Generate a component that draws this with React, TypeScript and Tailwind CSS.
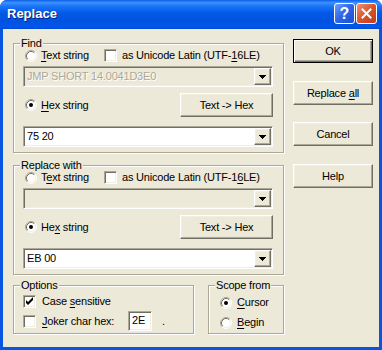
import React from 'react';

const raised =
  'border border-t-white border-l-white border-r-[#716F64] border-b-[#716F64] shadow-[inset_-1px_-1px_0_#ACA899,inset_1px_1px_0_#F1EFE2]';
const sunken =
  'border border-t-[#ACA899] border-l-[#ACA899] border-r-white border-b-white shadow-[inset_1px_1px_0_#716F64,inset_-1px_-1px_0_#F1EFE2]';

function U({ children }: { children: React.ReactNode }) {
  return <span className="underline decoration-1 underline-offset-[2px]">{children}</span>;
}

function Radio({ checked }: { checked?: boolean }) {
  return (
    <svg width="12" height="12" viewBox="0 0 12 12" className="shrink-0">
      <circle cx="6" cy="6" r="5" fill="white" />
      <path d="M2.11 9.89 A5.5 5.5 0 0 1 9.89 2.11" fill="none" stroke="#ACA899" />
      <path d="M9.89 2.11 A5.5 5.5 0 0 1 2.11 9.89" fill="none" stroke="white" />
      <path d="M2.82 9.18 A4.5 4.5 0 0 1 9.18 2.82" fill="none" stroke="#716F64" />
      <path d="M9.18 2.82 A4.5 4.5 0 0 1 2.82 9.18" fill="none" stroke="#F1EFE2" />
      {checked && <circle cx="6" cy="6" r="2" fill="black" />}
    </svg>
  );
}

function Check({ checked }: { checked?: boolean }) {
  return (
    <div className={`${sunken} w-[13px] h-[13px] shrink-0 bg-white flex items-center justify-center`}>
      {checked && (
        <svg width="9" height="9" viewBox="0 0 9 9">
          <path d="M1 3v3l2 2l5-5V0L3 5z" fill="black" />
        </svg>
      )}
    </div>
  );
}

function Arrow() {
  return (
    <svg width="7" height="4" viewBox="0 0 7 4" shapeRendering="crispEdges">
      <rect x="0" y="0" width="7" height="1" fill="black" />
      <rect x="1" y="1" width="5" height="1" fill="black" />
      <rect x="2" y="2" width="3" height="1" fill="black" />
      <rect x="3" y="3" width="1" height="1" fill="black" />
    </svg>
  );
}

function Btn({ children, className = '', def }: { children: React.ReactNode; className?: string; def?: boolean }) {
  if (def) {
    return (
      <div className={`border border-black bg-[#ECE9D8] flex items-center justify-center shadow-[inset_1px_1px_0_white,inset_-1px_-1px_0_#716F64,inset_-2px_-2px_0_#ACA899] ${className}`}>
        <span>{children}</span>
      </div>
    );
  }
  return (
    <div className={`${raised} bg-[#ECE9D8] flex items-center justify-center ${className}`}>
      <span>{children}</span>
    </div>
  );
}

function Combo({ value, disabled }: { value?: string; disabled?: boolean }) {
  return (
    <div className={`${sunken} w-[250px] h-[21px] p-[1px] flex items-center ${disabled ? 'bg-[#ECE9D8]' : 'bg-white'}`}>
      <span
        className={`flex-1 pl-[2px] leading-[13px] ${disabled ? 'text-[#ACA899] text-shadow-[1px_1px_0_white]' : 'text-black'}`}
      >
        {value}
      </span>
      <div className={`${raised} w-[17px] h-[17px] bg-[#ECE9D8] flex items-center justify-center`}>
        <Arrow />
      </div>
    </div>
  );
}

function Group({ label, className = '', children }: { label: string; className?: string; children: React.ReactNode }) {
  return (
    <div className={`relative border border-[#ACA899] shadow-[1px_1px_0_white,inset_1px_1px_0_white] ${className}`}>
      <span className="absolute -top-[7px] left-[6px] px-[1px] bg-[#ECE9D8] leading-[13px]">{label}</span>
      {children}
    </div>
  );
}

function SearchGroup({
  label,
  text,
  hex,
  utf,
  textValue,
  hexValue,
  className = '',
}: {
  label: string;
  text: React.ReactNode;
  hex: React.ReactNode;
  utf: React.ReactNode;
  textValue?: string;
  hexValue: string;
  className?: string;
}) {
  return (
    <Group label={label} className={`h-[110px] pl-[9px] ${className}`}>
      <div className="mt-[5px] h-[13px] flex items-center">
        <div className="w-[79px] ml-[2px] flex items-center gap-[4px]">
          <Radio />
          <span>{text}</span>
        </div>
        <Check />
        <span className="ml-[5px]">as Unicode Latin (UTF-{utf}LE)</span>
      </div>
      <div className="mt-[4px]">
        <Combo value={textValue} disabled />
      </div>
      <div className="mt-[6px] w-[250px] h-[24px] flex items-center">
        <div className="ml-[2px] flex items-center gap-[4px]">
          <Radio checked />
          <span>{hex}</span>
        </div>
        <Btn className="ml-auto w-[93px] h-[24px]">Text -&gt; Hex</Btn>
      </div>
      <div className="mt-[9px]">
        <Combo value={hexValue} />
      </div>
    </Group>
  );
}

export default function App() {
  return (
    <div className="w-[382px] h-[350px] bg-white font-['Liberation_Sans',Arial,sans-serif] text-[11px] tracking-[-0.2px] text-black">
      <div className="h-full flex flex-col rounded-t-[7px] bg-[#0855E0] overflow-hidden">
        {/* title bar */}
        <div className="h-[29px] shrink-0 flex items-center pl-[7px] pr-[5px] bg-[linear-gradient(to_bottom,#0A5FE8_0%,#3D8FFF_9%,#1A74F6_22%,#0359E6_45%,#0053E1_75%,#0057EA_92%,#0048D0_100%)]">
          <span className="flex-1 text-white font-bold text-[13px] tracking-normal text-shadow-[1px_1px_0_#0A1F7A] -mt-[1px]">
            Replace
          </span>
          <div className="flex gap-[1px] -mt-[2px]">
            <div className="w-[21px] h-[21px] rounded-[3px] border border-white bg-[linear-gradient(135deg,#6C9EFA_0%,#2D63E6_50%,#1C4FD2_100%)] flex items-center justify-center text-white font-bold text-[16px] leading-none tracking-normal">
              ?
            </div>
            <div className="w-[21px] h-[21px] rounded-[3px] border border-white bg-[linear-gradient(135deg,#EE9270_0%,#D9542C_50%,#C23C18_100%)] flex items-center justify-center">
              <svg width="11" height="11" viewBox="0 0 11 11">
                <path d="M1.5 1.5L9.5 9.5M9.5 1.5L1.5 9.5" stroke="white" strokeWidth="2" strokeLinecap="square" />
              </svg>
            </div>
          </div>
        </div>

        {/* client */}
        <div className="flex-1 mx-[3px] mb-[3px] bg-[#ECE9D8] flex pl-[10px] gap-[9px]">
          <div className="w-[271px] pt-[14px] flex flex-col">
            <SearchGroup
              label="Find"
              text={<><U>T</U>ext string</>}
              hex={<><U>H</U>ex string</>}
              utf={<><U>1</U>6</>}
              textValue="JMP SHORT 14.0041D3E0"
              hexValue="75 20"
            />
            <SearchGroup
              label="Replace with"
              className="mt-[12px]"
              text={<>T<U>e</U>xt string</>}
              hex={<>He<U>x</U> string</>}
              utf={<>1<U>6</U></>}
              hexValue="EB 00"
            />
            <div className="mt-[10px] flex gap-[14px]">
              <Group label="Options" className="w-[181px] h-[49px] pl-[9px]">
                <div className="mt-[9px] h-[13px] flex items-center gap-[6px]">
                  <Check checked />
                  <span>Case <U>s</U>ensitive</span>
                </div>
                <div className="mt-[3px] flex items-center">
                  <Check />
                  <span className="ml-[6px] w-[86px]">
                    <U>J</U>oker char hex:
                  </span>
                  <div className={`${sunken} w-[24px] h-[20px] bg-white pl-[3px] leading-[16px]`}>2E</div>
                  <span className="ml-[10px]">.</span>
                </div>
              </Group>
              <Group label="Scope from" className="w-[76px] h-[49px] pl-[11px]">
                <div className="mt-[10px] h-[13px] flex items-center gap-[5px]">
                  <Radio checked />
                  <span>
                    <U>C</U>ursor
                  </span>
                </div>
                <div className="mt-[7px] h-[13px] flex items-center gap-[5px]">
                  <Radio />
                  <span>
                    <U>B</U>egin
                  </span>
                </div>
              </Group>
            </div>
          </div>

          <div className="w-[80px] pt-[10px] flex flex-col">
            <Btn def className="h-[24px]">
              OK
            </Btn>
            <Btn className="mt-[18px] h-[24px]">
              Replace <U>a</U>ll
            </Btn>
            <Btn className="mt-[17px] h-[24px]">Cancel</Btn>
            <Btn className="mt-[18px] h-[24px]">Help</Btn>
          </div>
        </div>
      </div>
    </div>
  );
}
